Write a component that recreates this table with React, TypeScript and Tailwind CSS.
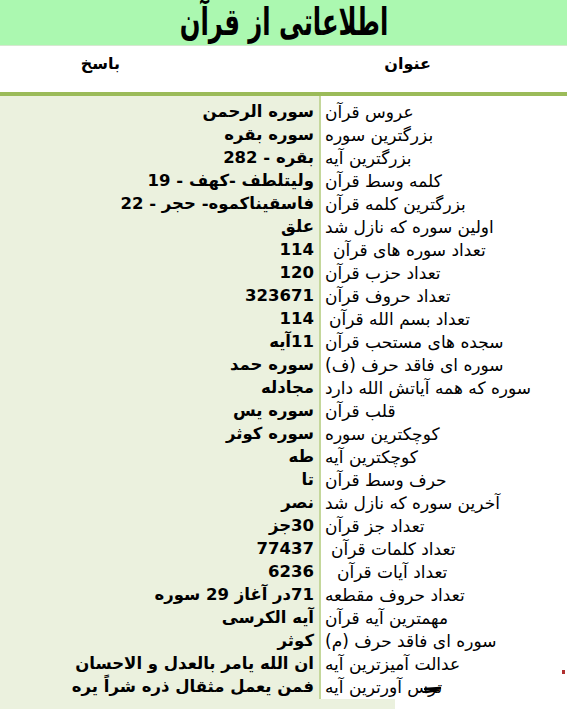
import React from 'react';

const rows: { label: string; value: string; indent?: string }[] = [
  { label: 'عروس قرآن', value: 'سوره الرحمن' },
  { label: 'بزرگترین سوره', value: 'سوره بقره' },
  { label: 'بزرگترین آیه', value: 'بقره - 282' },
  { label: 'کلمه وسط قرآن', value: 'ولیتلطف -کهف - 19' },
  { label: 'بزرگترین کلمه قرآن', value: 'فاسقیناکموه- حجر - 22' },
  { label: 'اولین سوره که نازل شد', value: 'علق' },
  { label: 'تعداد سوره های قرآن', value: '114', indent: 'pl-[8px]' },
  { label: 'تعداد حزب قرآن', value: '120' },
  { label: 'تعداد حروف قرآن', value: '323671' },
  { label: 'تعداد بسم الله قرآن', value: '114', indent: 'pl-[4px]' },
  { label: 'سجده های مستحب قرآن', value: '11آیه' },
  { label: 'سوره ای فاقد حرف (ف)', value: 'سوره حمد' },
  { label: 'سوره که همه آیاتش الله دارد', value: 'مجادله' },
  { label: 'قلب قرآن', value: 'سوره یس' },
  { label: 'کوچکترین سوره', value: 'سوره کوثر' },
  { label: 'کوچکترین آیه', value: 'طه' },
  { label: 'حرف وسط قرآن', value: 'تا' },
  { label: 'آخرین سوره که نازل شد', value: 'نصر' },
  { label: 'تعداد جز قرآن', value: '30جز' },
  { label: 'تعداد کلمات قرآن', value: '77437', indent: 'pl-[6px]' },
  { label: 'تعداد آیات قرآن', value: '6236', indent: 'pl-[12px]' },
  { label: 'تعداد حروف مقطعه', value: '71در آغاز 29 سوره' },
  { label: 'مهمترین آیه قرآن', value: 'آیه الکرسی' },
  { label: 'سوره ای فاقد حرف (م)', value: 'کوثر' },
  { label: 'عدالت آمیزترین آیه', value: 'ان الله یامر بالعدل و الاحسان' },
  { label: 'ترس آورترین آیه', value: 'فمن یعمل مثقال ذره شراً یره' },
];

export default function App() {
  return (
    <div
      className="relative w-[567px] h-[709px] overflow-hidden bg-white text-black"
      style={{ fontFamily: '"DejaVu Sans", Tahoma, sans-serif' }}
    >
      {/* Title */}
      <div className="h-[46px] bg-[#abf8b0] border-b border-[#d6e8d0] flex items-center justify-center">
        <h1
          dir="rtl"
          className="inline-block text-[38px] font-bold leading-none pb-[2px] scale-x-[0.64] whitespace-nowrap"
        >
          اطلاعاتی از قرآن
        </h1>
      </div>

      {/* Column headings */}
      <div dir="rtl" className="h-[46px] flex text-[16px] font-bold">
        <div className="w-[247px] pr-[136px] pt-[6px]">عنوان</div>
        <div className="flex-1 pr-[200px] pt-[6px]">باسخ</div>
      </div>
      <div className="h-[4px] bg-[#9bbb59]" />

      {/* Table */}
      <div dir="rtl" className="flex">
        <div className="w-[248px] border-l-2 border-[#c4d79b] bg-white">
          <div className="h-[5px]" />
          {rows.map((r) => (
            <div
              key={r.label}
              className={`h-[23px] flex items-center text-[17px] whitespace-nowrap ${r.indent ?? 'pl-0'}`}
            >
              <span className="w-full pl-[4px] text-left">{r.label}</span>
            </div>
          ))}
        </div>
        <div className="flex-1 bg-[#ebf1de]">
          <div className="h-[5px]" />
          {rows.map((r) => (
            <div
              key={r.label}
              className="h-[23px] flex items-center pr-[5px] text-[16.5px] font-bold whitespace-nowrap"
            >
              {r.value}
            </div>
          ))}
        </div>
      </div>

      {/* Bottom strip */}
      <div className="flex h-[12px]">
        <div className="w-[395px] bg-[#ebf1de]" />
      </div>

      {/* Marks over the sheet */}
      <svg className="absolute left-[424px] top-[686px]" width="18" height="8" viewBox="0 0 18 8">
        <path d="M1 3 L16 2 M2 6 L14 4" stroke="#000" strokeWidth="2.5" strokeLinecap="round" fill="none" />
      </svg>
      <div className="absolute left-[562px] top-[670px] w-[3px] h-[4px] bg-[#b03030]" />
    </div>
  );
}
